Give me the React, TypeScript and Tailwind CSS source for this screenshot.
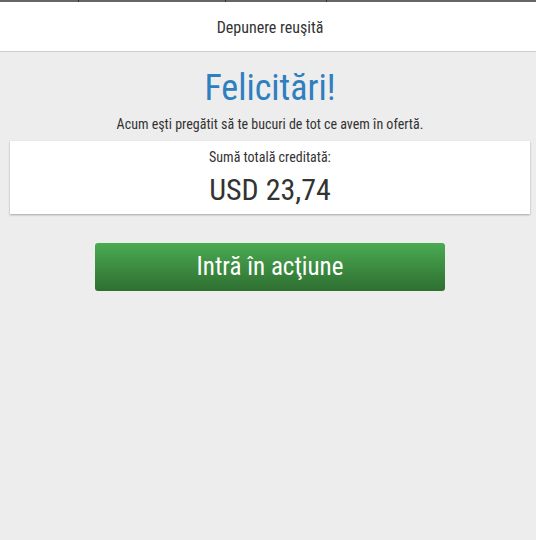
import React from "react";

const font = { fontFamily: '"Roboto Condensed", Roboto, "Liberation Sans", sans-serif' };

const App: React.FC = () => {
  return (
    <div className="min-h-[540px] overflow-hidden bg-[#ededed] text-[#333]" style={font}>
      {/* Top strip */}
      <div className="flex h-[2px] bg-[#666]">
        <div className="w-[79px] border-r border-[#333]" />
        <div className="w-[147px] border-r border-[#333]" />
        <div className="w-[101px] border-r border-[#333]" />
        <div className="flex-1" />
      </div>

      {/* Header */}
      <header className="h-[50px] border-b border-[#cfcfcf] bg-white">
        <div className="flex h-full w-[540px] items-center justify-center">
          <h1 className="mt-[2px] text-[16px]">Depunere reuşită</h1>
        </div>
      </header>

      {/* Body */}
      <div className="flex w-[540px] flex-col items-center px-[10px]">
        <h2 className="mt-[14px] text-[36px] leading-[44px] text-[#2d7fc0]">Felicitări!</h2>
        <p className="mt-[5px] text-[14px] leading-[18px]">
          Acum eşti pregătit să te bucuri de tot ce avem în ofertă.
        </p>

        <div className="mt-[8px] flex w-full flex-col items-center bg-white pt-[7px] pb-[4px] shadow-[0_1px_2px_rgba(0,0,0,0.3)]">
          <span className="text-[14px] leading-[18px]">Sumă totală creditată:</span>
          <span className="mt-[4px] text-[30px] leading-[40px]">USD 23,74</span>
        </div>

        <button className="mt-[29px] h-[48px] w-[350px] rounded-[3px] bg-gradient-to-b from-[#4aab52] to-[#2f6f31] text-[25px] text-white">
          Intră în acţiune
        </button>
      </div>
    </div>
  );
};

export default App;
